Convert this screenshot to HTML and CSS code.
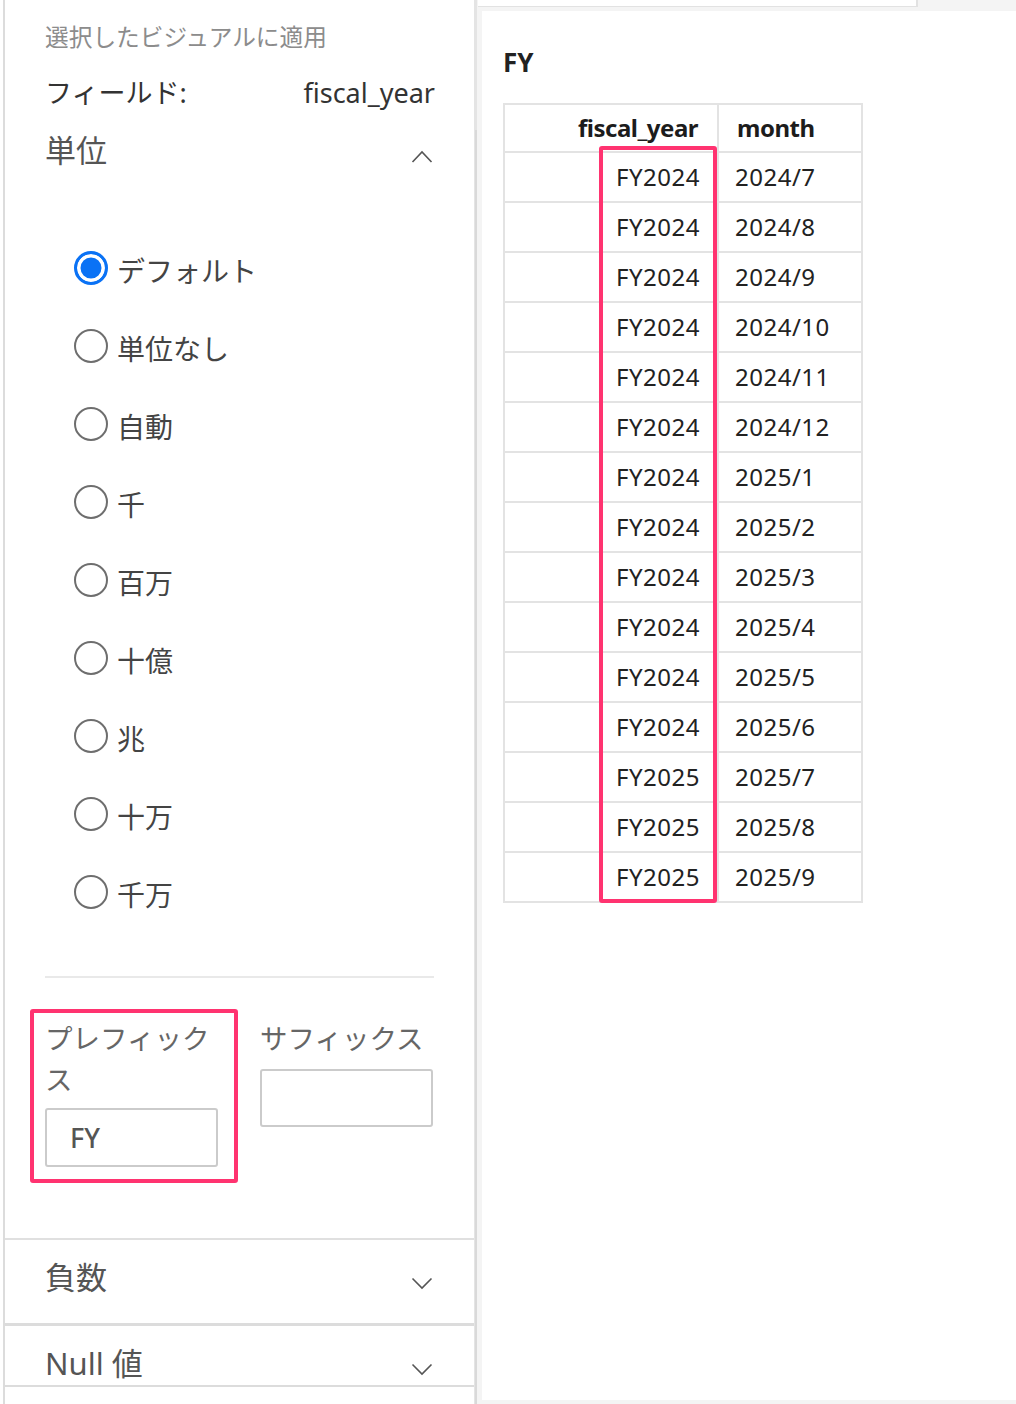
FILE: index.html
```html
<!DOCTYPE html>
<html lang="ja">
<head>
<meta charset="utf-8">
<title>書式設定</title>
<link rel="stylesheet" href="styles.css">
</head>
<body>
<div class="app">
  <aside class="panel">
    <div class="apply">選択したビジュアルに適用</div>
    <div class="field-row"><span>フィールド:</span><span class="field-name">fiscal_year</span></div>

    <section class="units">
      <div class="sec-head">
        <span class="sec-title">単位</span>
        <svg class="chev up" viewBox="0 0 22 13" width="22" height="13"><polyline points="1.5,12 11,2 20.5,12"/></svg>
      </div>
      <ul class="radios">
        <li><input type="radio" name="unit" checked><span>デフォルト</span></li>
        <li><input type="radio" name="unit"><span>単位なし</span></li>
        <li><input type="radio" name="unit"><span>自動</span></li>
        <li><input type="radio" name="unit"><span>千</span></li>
        <li><input type="radio" name="unit"><span>百万</span></li>
        <li><input type="radio" name="unit"><span>十億</span></li>
        <li><input type="radio" name="unit"><span>兆</span></li>
        <li><input type="radio" name="unit"><span>十万</span></li>
        <li><input type="radio" name="unit"><span>千万</span></li>
      </ul>
      <div class="sep"></div>
      <div class="affix">
        <div class="affix-col prefix">
          <label class="affix-label">プレフィックス</label>
          <input class="affix-input" type="text" value="FY">
        </div>
        <div class="affix-col suffix">
          <label class="affix-label">サフィックス</label>
          <input class="affix-input" type="text" value="">
        </div>
      </div>
    </section>

    <section class="collapsed neg">
      <div class="sec-head">
        <span class="sec-title">負数</span>
        <svg class="chev down" viewBox="0 0 22 13" width="22" height="13"><polyline points="1.5,1.5 11,11 20.5,1.5"/></svg>
      </div>
    </section>
    <section class="collapsed nullv">
      <div class="sec-head">
        <span class="sec-title">Null 値</span>
        <svg class="chev down" viewBox="0 0 22 13" width="22" height="13"><polyline points="1.5,1.5 11,11 20.5,1.5"/></svg>
      </div>
    </section>
  </aside>

  <main class="canvas">
    <div class="tab"></div>
    <div class="card">
      <h2 class="visual-title">FY</h2>
      <div class="table-wrap">
        <table class="grid">
          <colgroup><col class="c1"><col class="c2"></colgroup>
          <thead>
            <tr><th class="num">fiscal_year</th><th>month</th></tr>
          </thead>
          <tbody>
            <tr><td class="num">FY2024</td><td>2024/7</td></tr>
            <tr><td class="num">FY2024</td><td>2024/8</td></tr>
            <tr><td class="num">FY2024</td><td>2024/9</td></tr>
            <tr><td class="num">FY2024</td><td>2024/10</td></tr>
            <tr><td class="num">FY2024</td><td>2024/11</td></tr>
            <tr><td class="num">FY2024</td><td>2024/12</td></tr>
            <tr><td class="num">FY2024</td><td>2025/1</td></tr>
            <tr><td class="num">FY2024</td><td>2025/2</td></tr>
            <tr><td class="num">FY2024</td><td>2025/3</td></tr>
            <tr><td class="num">FY2024</td><td>2025/4</td></tr>
            <tr><td class="num">FY2024</td><td>2025/5</td></tr>
            <tr><td class="num">FY2024</td><td>2025/6</td></tr>
            <tr><td class="num">FY2025</td><td>2025/7</td></tr>
            <tr><td class="num">FY2025</td><td>2025/8</td></tr>
            <tr><td class="num">FY2025</td><td>2025/9</td></tr>
          </tbody>
        </table>
        <div class="mark"></div>
      </div>
    </div>
  </main>
</div>
</body>
</html>
```

FILE: styles.css
```css
html, body {
  margin: 0;
  padding: 0;
  background: #ffffff;
}

body {
  font-family: "Noto Sans", "Noto Sans CJK JP", sans-serif;
  color: #333;
}

.app {
  display: flex;
  align-items: stretch;
  width: 1016px;
  height: 1404px;
  overflow: hidden;
}

/* ---------- left panel ---------- */
.panel {
  position: relative;
  width: 469px;
  flex: none;
  margin-left: 3px;
  border-left: 2px solid #dcdcdc;
  border-right: 3px solid #e4e4e4;
  background: #fff;
}

.panel::after {
  content: "";
  position: absolute;
  top: 130px;
  bottom: 0;
  right: -3px;
  width: 2px;
  background: #d9d9d9;
}

.apply {
  padding: 19px 40px 0;
  font-family: "Noto Sans CJK JP", sans-serif;
  font-size: 23.7px;
  line-height: 34px;
  color: #8c8c8c;
}

.field-row {
  display: flex;
  justify-content: space-between;
  margin: 20px 40px 0;
  font-size: 27px;
  line-height: 40px;
  color: #333;
}

.field-name {
  margin-right: -1px;
}

.sec-head {
  display: flex;
  justify-content: space-between;
  align-items: center;
  height: 44px;
}

.sec-title {
  font-size: 31px;
  line-height: 44px;
  color: #555;
}

.chev {
  margin-right: 1px;
  margin-top: 12px;
  fill: none;
  stroke: #555;
  stroke-width: 1.6;
}

.units {
  margin-top: 15px;
  padding: 0 40px 71px;
}

.radios {
  list-style: none;
  margin: 0;
  padding: 57px 0 45px 29px;
}

.radios li {
  display: flex;
  align-items: center;
  height: 78px;
}

.radios input {
  appearance: none;
  -webkit-appearance: none;
  box-sizing: border-box;
  width: 34px;
  height: 34px;
  margin: 0;
  border: 2px solid #6e6e6e;
  border-radius: 50%;
  background: #fff;
  flex: none;
}

.radios input:checked {
  border: 3px solid #0a72f5;
  background: #0a72f5;
  box-shadow: inset 0 0 0 3.5px #fff;
}

.radios span {
  margin-left: 9px;
  font-family: "Noto Sans CJK JP", sans-serif;
  font-size: 28px;
  line-height: 40px;
  color: #444;
  position: relative;
  top: 2px;
}

.sep {
  height: 2px;
  background: #e9e9e9;
}

.affix {
  display: grid;
  grid-template-columns: 173px 173px;
  column-gap: 42px;
  align-items: start;
  margin-top: 39px;
}

.affix-col {
  position: relative;
  display: flex;
  flex-direction: column;
}

.affix-label {
  font-family: "Noto Sans CJK JP", sans-serif;
  font-size: 27.5px;
  line-height: 41px;
  color: #666;
}

.affix-input {
  box-sizing: border-box;
  width: 100%;
  margin: 9px 0 0;
  padding: 0 0 0 23px;
  border: 2px solid #cbcbcb;
  border-radius: 3px;
  font-family: "Noto Sans", sans-serif;
  font-size: 27px;
  font-weight: 500;
  color: #555;
  background: #fff;
}

.prefix .affix-input {
  height: 59px;
}

.suffix .affix-input {
  margin-top: 11px;
  height: 58px;
}

.prefix::after {
  content: "";
  position: absolute;
  top: -8px;
  left: -15px;
  right: -20px;
  bottom: -16px;
  border: 4px solid #ff3370;
  border-radius: 3px;
  pointer-events: none;
}

.collapsed {
  padding: 15px 40px 24px;
  border-top: 2px solid #e0e0e0;
}

.collapsed.nullv {
  border-top: 3px solid #dcdcdc;
  border-bottom: 2px solid #dcdcdc;
  padding-bottom: 0;
  height: 44px;
}

.collapsed .sec-title {
  font-size: 31px;
}

/* ---------- right canvas ---------- */
.canvas {
  flex: 1;
  display: flex;
  flex-direction: column;
  background: #f4f4f4;
}

.tab {
  width: 438px;
  height: 6px;
  margin-left: 1px;
  background: #fff;
  border-right: 2px solid #e2e2e2;
  border-bottom: 1px solid #e2e2e2;
}

.card {
  margin: 4px 0 4px 5px;
  flex: 1;
  background: #fff;
  padding: 33px 0 0 21px;
}

.visual-title {
  margin: 0;
  font-size: 26px;
  line-height: 36px;
  font-weight: 700;
  color: #222;
}

.table-wrap {
  position: relative;
  width: 360px;
  margin-top: 23px;
}

.grid {
  border-collapse: collapse;
  table-layout: fixed;
  width: 358px;
  font-size: 24px;
  color: #222;
}

.grid .c1 { width: 214px; }
.grid .c2 { width: 144px; }

.grid th,
.grid td {
  border: 2px solid #e3e3e3;
  padding: 0 17px;
  white-space: nowrap;
  text-align: left;
}

.grid th {
  line-height: 46px;
  font-weight: 700;
  color: #1c1c1c;
  padding-right: 19px;
  padding-left: 18px;
  letter-spacing: -0.5px;
}

.grid td {
  line-height: 48px;
  letter-spacing: 0.5px;
  padding-left: 16px;
}

.grid .num {
  text-align: right;
}

.mark {
  position: absolute;
  left: 96px;
  top: 43px;
  width: 118px;
  height: 757px;
  box-sizing: border-box;
  border: 4px solid #ff3370;
  border-radius: 3px;
  pointer-events: none;
}
```
